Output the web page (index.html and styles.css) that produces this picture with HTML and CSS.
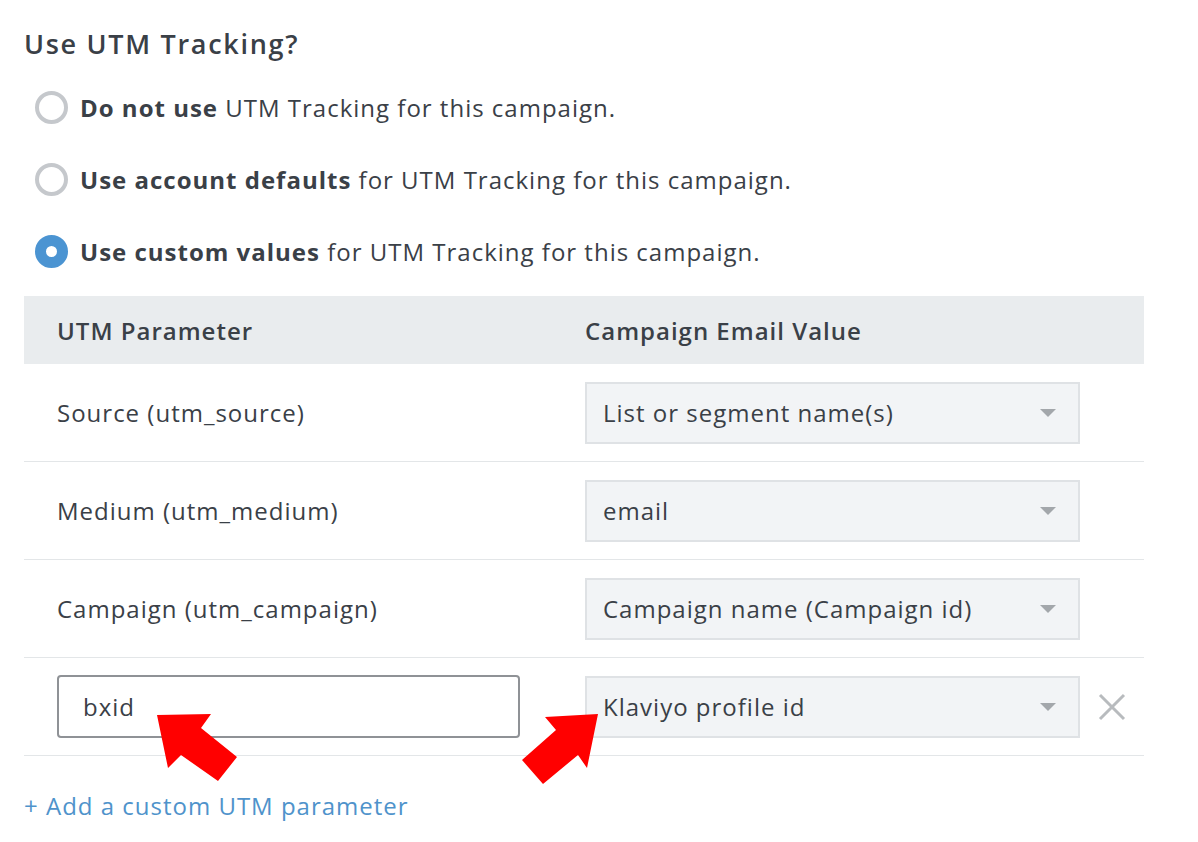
FILE: index.html
```html
<!DOCTYPE html>
<html>
<head>
<meta charset="utf-8">
<link rel="stylesheet" href="styles.css">
</head>
<body>
<div class="page">
  <h2 class="title">Use UTM Tracking?</h2>
  <div class="options">
    <div class="option"><span class="radio"></span><span><b>Do not use</b> UTM Tracking for this campaign.</span></div>
    <div class="option"><span class="radio"></span><span><b>Use account defaults</b> for UTM Tracking for this campaign.</span></div>
    <div class="option"><span class="radio checked"></span><span><b>Use custom values</b> for UTM Tracking for this campaign.</span></div>
  </div>
  <div class="table">
    <div class="row head">
      <div class="c1">UTM Parameter</div>
      <div class="c2">Campaign Email Value</div>
    </div>
    <div class="row">
      <div class="c1">Source (utm_source)</div>
      <div class="c2"><div class="select"><span>List or segment name(s)</span><span class="caret"></span></div></div>
    </div>
    <div class="row">
      <div class="c1">Medium (utm_medium)</div>
      <div class="c2"><div class="select"><span>email</span><span class="caret"></span></div></div>
    </div>
    <div class="row">
      <div class="c1">Campaign (utm_campaign)</div>
      <div class="c2"><div class="select"><span>Campaign name (Campaign id)</span><span class="caret"></span></div></div>
    </div>
    <div class="row">
      <div class="c1"><div class="input">bxid</div></div>
      <div class="c2"><div class="select"><span>Klaviyo profile id</span><span class="caret"></span></div>
        <svg class="remove" width="30" height="30" viewBox="0 0 30 30"><path d="M3 3 L27 27 M27 3 L3 27" stroke="#b8bbbe" stroke-width="3" fill="none"/></svg>
      </div>
    </div>
  </div>
  <a class="add">+ Add a custom UTM parameter</a>
</div>
<svg class="arrows" width="1198" height="842" viewBox="0 0 1198 842">
  <polygon points="157,715 211,714 201,728 237,757 218,781 181,755 168,768" fill="#ff0000"/>
  <polygon points="598,714 545,717 556,730 522,760 543,784 578,755 587,768" fill="#ff0000"/>
</svg>
</body>
</html>
```
FILE: styles.css
```css
html, body { margin: 0; padding: 0; background: #fff; }
body {
  font-family: "Open Sans", "Liberation Sans", sans-serif;
  color: #3a4047;
  font-size: 24px;
  letter-spacing: 1px;
  position: relative;
  width: 1198px;
  height: 842px;
  overflow: hidden;
}
.page { padding: 24px 0 0 24px; width: 1120px; }
.title {
  margin: 0;
  font-size: 27px;
  letter-spacing: 1.7px;
  font-weight: 600;
  line-height: 40px;
}
.options { margin-top: 25px; display: flex; flex-direction: column; gap: 36px; }
.option { display: flex; align-items: center; height: 36px; }
.option b { font-weight: 700; }
.radio {
  box-sizing: border-box;
  width: 33px; height: 33px;
  border-radius: 50%;
  border: 4px solid #c5c8cc;
  margin: 0 12px 0 11px;
  flex: none;
  background: #fff;
}
.radio.checked {
  border: 11px solid #4b94d2;
  background: #fff;
}
.table { margin-top: 27px; }
.row {
  display: flex;
  align-items: center;
  height: 97px;
  border-bottom: 1px solid #e3e6e8;
}
.row.head {
  height: 68px;
  background: #e9ecee;
  border-bottom: none;
  font-weight: 600;
}
.c1 { width: 528px; padding-left: 33px; flex: none; }
.c2 { display: flex; align-items: center; flex: 1; }
.select {
  box-sizing: border-box;
  width: 495px;
  height: 62px;
  background: #f2f4f6;
  border: 2px solid #dfe2e5;
  display: flex;
  align-items: center;
  justify-content: space-between;
  padding: 0 22px 0 16px;
}
.caret {
  width: 0; height: 0;
  border-left: 8px solid transparent;
  border-right: 8px solid transparent;
  border-top: 8px solid #a3a7ab;
}
.input {
  box-sizing: border-box;
  width: 463px;
  height: 63px;
  border: 2px solid #8f9296;
  border-radius: 4px;
  display: flex;
  align-items: center;
  padding-left: 24px;
}
.remove { margin-left: 17px; }
.add {
  display: block;
  margin-top: 33px;
  color: #4f93cb;
  font-size: 24px;
}
.arrows { position: absolute; left: 0; top: 0; pointer-events: none; }
```
